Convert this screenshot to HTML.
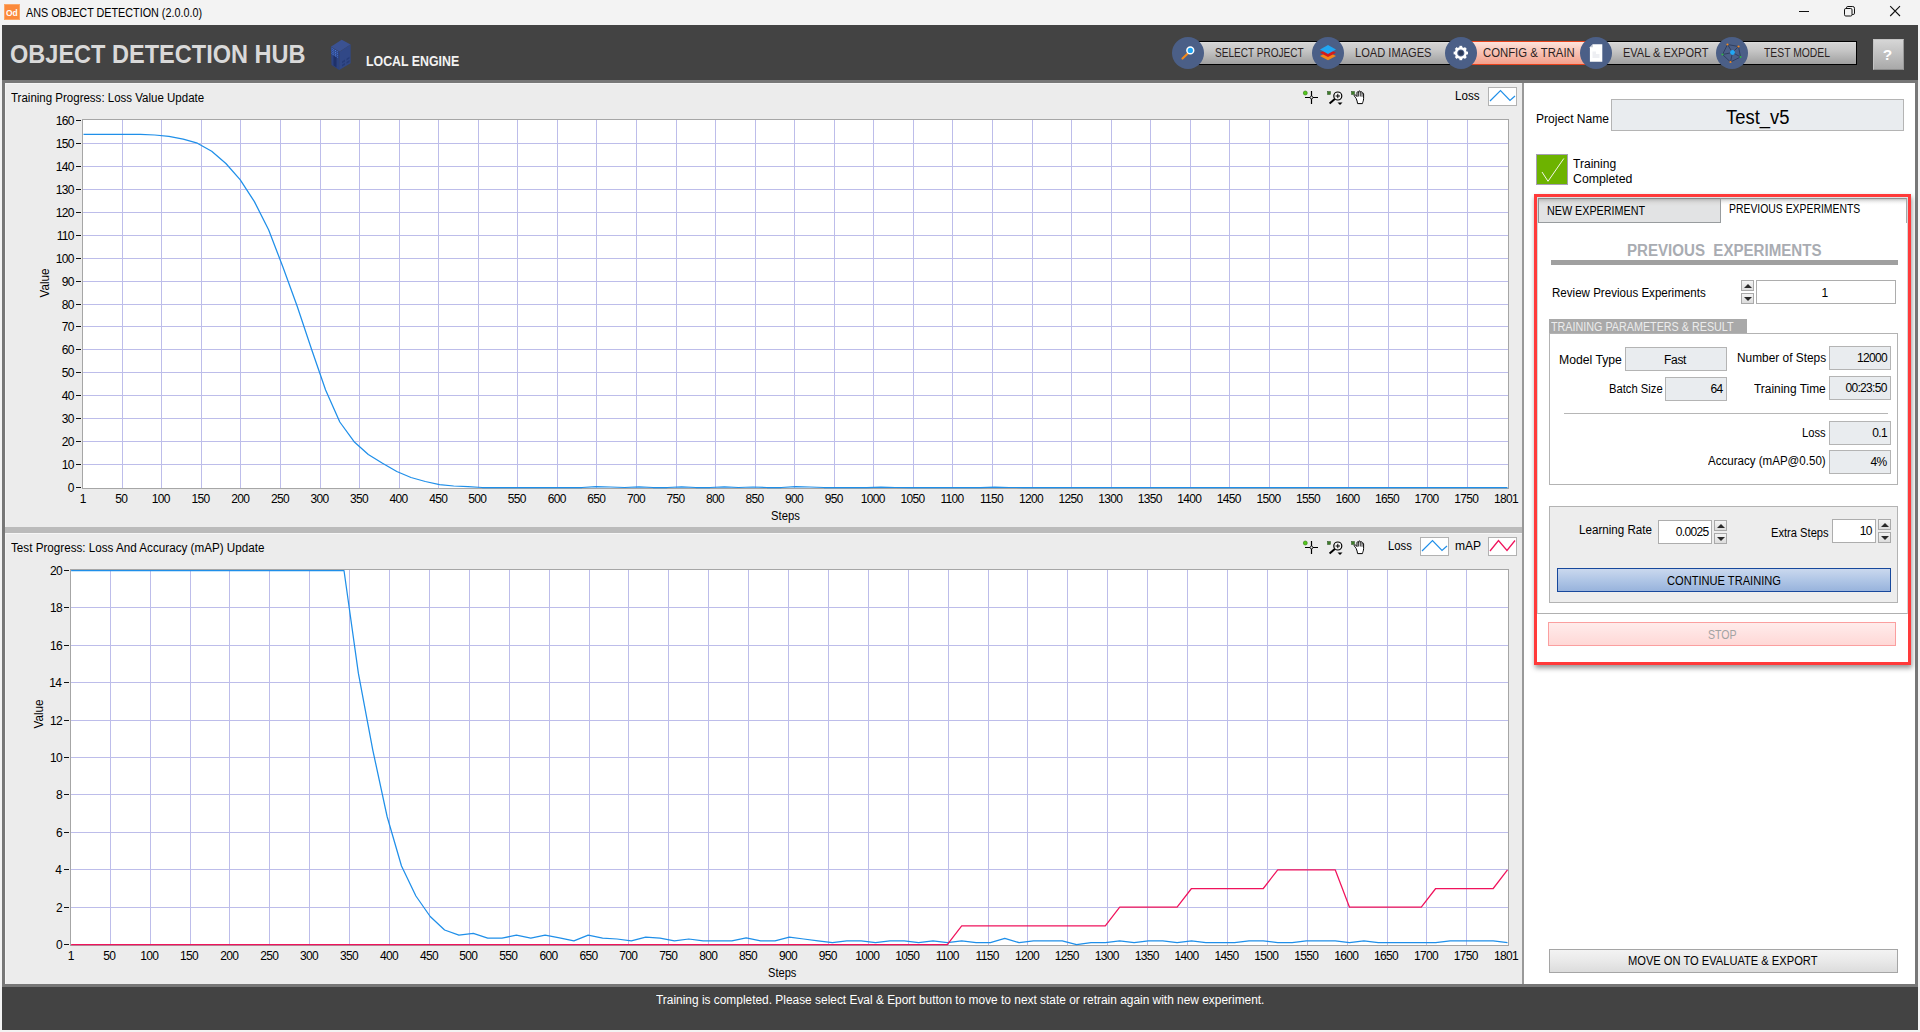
<!DOCTYPE html>
<html lang="en"><head><meta charset="utf-8"><title>ANS OBJECT DETECTION (2.0.0.0)</title>
<style>
html,body{margin:0;padding:0;background:#f3f3f3;}
#app{position:relative;width:1920px;height:1032px;overflow:hidden;background:#f3f3f3;font-family:"Liberation Sans",sans-serif;font-size:12px;color:#000;}
#app div,#app svg,#app i{position:absolute;box-sizing:border-box;}
.t{white-space:nowrap;line-height:0;height:0;}
.plot{overflow:visible;}
.ticks i{display:block;height:1px;background:#111;}
.fld{background:#e9ecef;border:1px solid #b4b4b4;}
.inp{background:#fff;border:1px solid #adadad;}
.spin{background:linear-gradient(#f4f4f4,#dcdcdc);border:1px solid #a9a9a9;}
.spin:after{content:"";position:absolute;left:50%;top:50%;margin-left:-4px;border:4px solid transparent;}
.spin.up:after{border-bottom:4px solid #2a2a2a;margin-top:-6px;}
.spin.dn:after{border-top:4px solid #2a2a2a;margin-top:-2px;}
.nav{height:24px;top:41px;border:1px solid #000;background:linear-gradient(#dedede 0%,#d2d2d2 8%,#c8c8c8 35%,#b2b2b2 70%,#a0a0a0 100%);}
.nav.on{border-color:#e8421c;background:linear-gradient(#fde3dc 0%,#f9c3b5 45%,#f3a08c 100%);}
.circ{width:32px;height:32px;top:37px;border-radius:50%;background:#4b5f87;}
.lg{background:#fff;border:1px solid #b2b2b2;}
</style></head>
<body>
<div id="app">

<div style="left:2px;top:25px;width:1916px;height:1005px;background:#434343"></div>
<div style="left:4px;top:4px;width:16px;height:16px;background:#fb8a3c;border:1px solid #fca766"></div>
<svg style="left:1790px;top:0" width="130" height="25" viewBox="0 0 130 25" fill="none" stroke="#111" stroke-width="1"><path d="M9 11.5H19"/><rect x="54.5" y="8.5" width="7.5" height="7.5" rx="1.3"/><path d="M56.5 8.5V7.8Q56.5 6.5 57.8 6.5H62.7Q64.5 6.5 64.5 8.3V13.2Q64.5 14.5 63.2 14.5H62.2"/><path d="M100.2 6.2L110 16M110 6.2L100.2 16" stroke-width="1.1"/></svg>

<!-- navigation -->
<div class="nav" style="left:1190px;width:140px"></div>
<div class="nav" style="left:1329px;width:133px"></div>
<div class="nav on" style="left:1461px;width:137px"></div>
<div class="nav" style="left:1597px;width:137px"></div>
<div class="nav" style="left:1733px;width:124px"></div>
<div class="circ" style="left:1172px"></div>
<div class="circ" style="left:1312px"></div>
<div class="circ" style="left:1445px"></div>
<div class="circ" style="left:1580px"></div>
<div class="circ" style="left:1716px"></div>
<div style="left:1873px;top:39px;width:31px;height:31px;background:linear-gradient(#d6d6d6,#a9a9a9);border:1px solid #c4c4c4;border-bottom-color:#8c8c8c;border-right-color:#9a9a9a"></div>

<!-- panels -->
<div style="left:2px;top:80px;width:1916px;height:907px;background:#777"></div>
<div style="left:5px;top:83px;width:1517px;height:901px;background:#ececec;border-top:1px solid #f4f4f4;border-left:1px solid #f4f4f4"></div>
<div style="left:1522px;top:83px;width:2px;height:901px;background:#999"></div>
<div style="left:1524px;top:83px;width:391px;height:901px;background:#fff"></div>
<div style="left:5px;top:527px;width:1517px;height:6px;background:#bbb"></div>
<div style="left:6px;top:533px;width:1516px;height:1px;background:#f6f6f6"></div>

<!-- legends -->
<div class="lg" style="left:1488px;top:87px;width:29px;height:19px"></div>
<div class="lg" style="left:1420px;top:537px;width:29px;height:19px"></div>
<div class="lg" style="left:1488px;top:537px;width:29px;height:19px"></div>

<!-- right panel -->
<div class="fld" style="left:1611px;top:99px;width:293px;height:32px"></div>
<div style="left:1536px;top:154px;width:32px;height:31px;background:#6db300;border:1px solid #a59fb4"></div>
<div style="left:1534px;top:194px;width:377px;height:471px;border:3px solid #ff3a3a;box-shadow:1px 3px 5px rgba(0,0,0,.42);background:#fff"></div>
<div style="left:1537px;top:197px;width:371px;height:417px;border:1px solid #b0b0b0;border-top:none;border-left-color:#d4d8d8;border-right-color:#d4d8d8;background:#fff"></div>
<div style="left:1537px;top:197px;width:371px;height:1px;background:#dfe3e3"></div>
<div style="left:1721px;top:198px;width:186px;height:25px;border-top:1px solid #8f9193;border-right:1px solid #a4a6a8;background:linear-gradient(#c4c4c4 0,#e6e6e6 2px,#f8f8f8 4px,#fff 6px)"></div>
<div style="left:1538px;top:198px;width:183px;height:25px;border:1px solid #989c9e;border-top-color:#85898b;border-left-color:#8d9193;background:linear-gradient(#b6b6b6 0,#cecece 2px,#dcdcdc 4px,#e2e3e4 7px,#e2e3e4)"></div>
<div style="left:1551px;top:260px;width:347px;height:5px;background:#a0a0a0"></div>
<div class="spin up" style="left:1741px;top:280px;width:13px;height:11px"></div>
<div class="spin dn" style="left:1741px;top:293px;width:13px;height:11px"></div>
<div class="inp" style="left:1756px;top:280px;width:140px;height:24px"></div>
<div style="left:1549px;top:319px;width:198px;height:14px;background:#a9a9a9"></div>
<div style="left:1549px;top:333px;width:349px;height:152px;border:1px solid #b3b3b3;background:#fff"></div>
<div class="fld" style="left:1625px;top:347px;width:102px;height:24px"></div>
<div class="fld" style="left:1829px;top:346px;width:62px;height:24px"></div>
<div class="fld" style="left:1665px;top:377px;width:62px;height:24px"></div>
<div class="fld" style="left:1829px;top:376px;width:62px;height:24px"></div>
<div style="left:1564px;top:413px;width:324px;height:1px;background:#b6b6b6"></div>
<div class="fld" style="left:1829px;top:421px;width:62px;height:24px"></div>
<div class="fld" style="left:1829px;top:450px;width:62px;height:24px"></div>
<div style="left:1549px;top:506px;width:349px;height:97px;border:1px solid #b3b3b3;background:#ededed"></div>
<div class="inp" style="left:1658px;top:520px;width:54px;height:24px"></div>
<div class="spin up" style="left:1714px;top:520px;width:13px;height:11px"></div>
<div class="spin dn" style="left:1714px;top:533px;width:13px;height:11px"></div>
<div class="inp" style="left:1832px;top:519px;width:44px;height:24px"></div>
<div class="spin up" style="left:1878px;top:519px;width:13px;height:11px"></div>
<div class="spin dn" style="left:1878px;top:532px;width:13px;height:11px"></div>
<div style="left:1557px;top:568px;width:334px;height:24px;border:1px solid #17489c;background:linear-gradient(#cad8ee 0%,#b0c6e6 50%,#98b3dc 100%)"></div>
<div style="left:1548px;top:622px;width:348px;height:24px;border:1px solid #fb9f9f;background:linear-gradient(#ffeceb,#ffe2e1 50%,#ffd8d6)"></div>
<div style="left:1549px;top:949px;width:349px;height:24px;border:1px solid #a5a5a5;background:linear-gradient(#f3f3f3,#e9e9e9 50%,#dcdcdc)"></div>
<svg class="plot" style="left:82px;top:119px" width="1427" height="370" viewBox="82 119 1427 370">
<rect x="82.5" y="119.5" width="1426" height="369" fill="#fff" stroke="#a6a6a6"/>
<path d="M122.5 120V488M161.5 120V488M201.5 120V488M240.5 120V488M280.5 120V488M320.5 120V488M359.5 120V488M399.5 120V488M438.5 120V488M478.5 120V488M517.5 120V488M557.5 120V488M596.5 120V488M636.5 120V488M676.5 120V488M715.5 120V488M755.5 120V488M794.5 120V488M834.5 120V488M873.5 120V488M913.5 120V488M952.5 120V488M992.5 120V488M1032.5 120V488M1071.5 120V488M1111.5 120V488M1150.5 120V488M1190.5 120V488M1229.5 120V488M1269.5 120V488M1308.5 120V488M1348.5 120V488M1388.5 120V488M1427.5 120V488M1467.5 120V488M83 464.5H1508M83 441.5H1508M83 418.5H1508M83 395.5H1508M83 372.5H1508M83 349.5H1508M83 326.5H1508M83 304.5H1508M83 281.5H1508M83 258.5H1508M83 235.5H1508M83 212.5H1508M83 189.5H1508M83 166.5H1508M83 143.5H1508" stroke="#bdbdea" stroke-width="1" fill="none" shape-rendering="crispEdges"/>
<polyline points="83.5,134.4 97.7,134.4 112.0,134.4 126.2,134.4 140.5,134.4 154.7,135.0 168.9,136.4 183.2,139.2 197.4,143.2 211.7,151.2 225.9,163.5 240.1,179.6 254.4,201.6 268.6,229.7 282.9,267.0 297.1,306.0 311.3,348.5 325.6,390.0 339.8,422.0 354.1,441.7 368.3,454.5 382.5,463.3 396.8,471.5 411.0,477.5 425.3,481.5 439.5,484.6 453.7,486.0 468.0,486.6 482.2,487.5 496.5,487.5 510.7,487.5 524.9,487.5 539.2,487.5 553.4,487.5 567.7,487.5 581.9,487.5 596.1,486.6 610.4,487.0 624.6,487.5 638.9,486.8 653.1,487.5 667.3,487.5 681.6,486.9 695.8,487.5 710.1,487.5 724.3,486.8 738.5,487.5 752.8,487.0 767.0,487.5 781.3,487.5 795.5,486.7 809.7,487.0 824.0,487.5 838.2,487.5 852.4,487.5 866.7,487.5 880.9,487.2 895.2,487.5 909.4,487.5 923.6,487.5 937.9,487.5 952.1,487.5 966.4,487.5 980.6,487.5 994.8,487.2 1009.1,487.5 1023.3,487.5 1037.6,487.5 1051.8,487.5 1066.0,487.5 1080.3,487.5 1094.5,487.5 1108.8,487.5 1123.0,487.5 1137.2,487.5 1151.5,487.5 1165.7,487.5 1180.0,487.5 1194.2,487.5 1208.4,487.5 1222.7,487.5 1236.9,487.5 1251.2,487.5 1265.4,487.5 1279.6,487.5 1293.9,487.5 1308.1,487.5 1322.4,487.5 1336.6,487.5 1350.8,487.5 1365.1,487.5 1379.3,487.5 1393.6,487.5 1407.8,487.5 1422.0,487.5 1436.3,487.5 1450.5,487.5 1464.8,487.5 1479.0,487.5 1493.2,487.5 1507.5,487.5" fill="none" stroke="#1f8fe9" stroke-width="1.25" stroke-linejoin="round"/>
</svg><svg class="plot" style="left:70px;top:569px" width="1439" height="377" viewBox="70 569 1439 377">
<rect x="70.5" y="569.5" width="1438" height="376" fill="#fff" stroke="#a6a6a6"/>
<path d="M110.5 570V945M150.5 570V945M190.5 570V945M229.5 570V945M269.5 570V945M309.5 570V945M349.5 570V945M389.5 570V945M429.5 570V945M469.5 570V945M509.5 570V945M549.5 570V945M589.5 570V945M628.5 570V945M668.5 570V945M708.5 570V945M748.5 570V945M788.5 570V945M828.5 570V945M868.5 570V945M908.5 570V945M948.5 570V945M988.5 570V945M1027.5 570V945M1067.5 570V945M1107.5 570V945M1147.5 570V945M1187.5 570V945M1227.5 570V945M1267.5 570V945M1307.5 570V945M1347.5 570V945M1387.5 570V945M1426.5 570V945M1466.5 570V945M71 907.5H1508M71 869.5H1508M71 832.5H1508M71 794.5H1508M71 757.5H1508M71 720.5H1508M71 682.5H1508M71 645.5H1508M71 607.5H1508" stroke="#bdbdea" stroke-width="1" fill="none" shape-rendering="crispEdges"/>
<polyline points="71.1,570.5 85.5,570.5 99.8,570.5 114.2,570.5 128.6,570.5 142.9,570.5 157.3,570.5 171.7,570.5 186.0,570.5 200.4,570.5 214.8,570.5 229.1,570.5 243.5,570.5 257.9,570.5 272.2,570.5 286.6,570.5 300.9,570.5 315.3,570.5 329.7,570.5 344.0,570.5 358.4,673.4 372.8,750.1 387.1,816.5 401.5,866.0 415.9,896.0 430.2,916.5 444.6,930.0 458.9,935.2 473.3,933.4 487.7,938.1 502.0,938.1 516.4,935.2 530.8,938.1 545.1,935.2 559.5,937.9 573.9,940.9 588.2,935.2 602.6,938.1 617.0,939.0 631.3,940.9 645.7,937.1 660.0,938.1 674.4,940.9 688.8,939.0 703.1,940.9 717.5,940.9 731.9,940.9 746.2,937.9 760.6,940.9 775.0,940.9 789.3,937.1 803.7,939.0 818.0,940.9 832.4,942.7 846.8,940.9 861.1,940.9 875.5,942.7 889.9,940.9 904.2,940.9 918.6,942.7 933.0,940.9 947.3,942.7 961.7,940.9 976.1,942.7 990.4,942.7 1004.8,938.4 1019.1,942.7 1033.5,940.9 1047.9,940.9 1062.2,940.9 1076.6,944.6 1091.0,942.7 1105.3,942.7 1119.7,940.9 1134.1,942.7 1148.4,940.9 1162.8,940.9 1177.1,942.7 1191.5,940.9 1205.9,942.7 1220.2,942.7 1234.6,942.7 1249.0,940.9 1263.3,940.9 1277.7,942.7 1292.1,942.7 1306.4,940.9 1320.8,940.9 1335.2,940.9 1349.5,942.7 1363.9,940.9 1378.2,942.7 1392.6,942.7 1407.0,942.7 1421.3,942.7 1435.7,942.7 1450.1,940.9 1464.4,940.9 1478.8,940.9 1493.2,940.9 1507.5,942.7" fill="none" stroke="#1f8fe9" stroke-width="1.25" stroke-linejoin="round"/>
<polyline points="71.1,944.6 85.5,944.6 99.8,944.6 114.2,944.6 128.6,944.6 142.9,944.6 157.3,944.6 171.7,944.6 186.0,944.6 200.4,944.6 214.8,944.6 229.1,944.6 243.5,944.6 257.9,944.6 272.2,944.6 286.6,944.6 300.9,944.6 315.3,944.6 329.7,944.6 344.0,944.6 358.4,944.6 372.8,944.6 387.1,944.6 401.5,944.6 415.9,944.6 430.2,944.6 444.6,944.6 458.9,944.6 473.3,944.6 487.7,944.6 502.0,944.6 516.4,944.6 530.8,944.6 545.1,944.6 559.5,944.6 573.9,944.6 588.2,944.6 602.6,944.6 617.0,944.6 631.3,944.6 645.7,944.6 660.0,944.6 674.4,944.6 688.8,944.6 703.1,944.6 717.5,944.6 731.9,944.6 746.2,944.6 760.6,944.6 775.0,944.6 789.3,944.6 803.7,944.6 818.0,944.6 832.4,944.6 846.8,944.6 861.1,944.6 875.5,944.6 889.9,944.6 904.2,944.6 918.6,944.6 933.0,944.6 947.3,944.6 961.7,925.9 976.1,925.9 990.4,925.9 1004.8,925.9 1019.1,925.9 1033.5,925.9 1047.9,925.9 1062.2,925.9 1076.6,925.9 1091.0,925.9 1105.3,925.9 1119.7,907.2 1134.1,907.2 1148.4,907.2 1162.8,907.2 1177.1,907.2 1191.5,888.5 1205.9,888.5 1220.2,888.5 1234.6,888.5 1249.0,888.5 1263.3,888.5 1277.7,869.8 1292.1,869.8 1306.4,869.8 1320.8,869.8 1335.2,869.8 1349.5,907.2 1363.9,907.2 1378.2,907.2 1392.6,907.2 1407.0,907.2 1421.3,907.2 1435.7,888.5 1450.1,888.5 1464.4,888.5 1478.8,888.5 1493.2,888.5 1507.5,869.8" fill="none" stroke="#f0135c" stroke-width="1.25" stroke-linejoin="round"/>
</svg><div class="ticks"><i style="left:76px;top:487px;width:5px"></i><i style="left:76px;top:464px;width:5px"></i><i style="left:76px;top:441px;width:5px"></i><i style="left:76px;top:418px;width:5px"></i><i style="left:76px;top:395px;width:5px"></i><i style="left:76px;top:372px;width:5px"></i><i style="left:76px;top:349px;width:5px"></i><i style="left:76px;top:326px;width:5px"></i><i style="left:76px;top:304px;width:5px"></i><i style="left:76px;top:281px;width:5px"></i><i style="left:76px;top:258px;width:5px"></i><i style="left:76px;top:235px;width:5px"></i><i style="left:76px;top:212px;width:5px"></i><i style="left:76px;top:189px;width:5px"></i><i style="left:76px;top:166px;width:5px"></i><i style="left:76px;top:143px;width:5px"></i><i style="left:76px;top:120px;width:5px"></i><i style="left:64px;top:944px;width:5px"></i><i style="left:64px;top:907px;width:5px"></i><i style="left:64px;top:869px;width:5px"></i><i style="left:64px;top:832px;width:5px"></i><i style="left:64px;top:794px;width:5px"></i><i style="left:64px;top:757px;width:5px"></i><i style="left:64px;top:720px;width:5px"></i><i style="left:64px;top:682px;width:5px"></i><i style="left:64px;top:645px;width:5px"></i><i style="left:64px;top:607px;width:5px"></i><i style="left:64px;top:570px;width:5px"></i></div>
<!-- chart tool icons -->
<svg style="left:1300px;top:88px" width="72" height="20" viewBox="1300 88 72 20" fill="none">
<g>
<circle cx="1305.3" cy="93" r="2" fill="#55c81e" stroke="#2d7a0c" stroke-width=".6"/>
<path d="M1311.5 91V104M1305 97.5H1318" stroke="#000" stroke-width="1.2"/><circle cx="1311.5" cy="97.5" r="1.4" fill="#ececec" stroke="#000" stroke-width=".8"/>
<rect x="1327.5" y="91.5" width="3" height="3" fill="#3d7d2a" stroke="#2b4d22" stroke-width=".5"/>
<circle cx="1337.8" cy="96" r="4" fill="#f4f4f4" stroke="#000" stroke-width="1.2"/><path d="M1335.6 96H1340M1337.8 93.8V98.2" stroke="#000" stroke-width="1"/><path d="M1334.8 99L1329.6 103.6" stroke="#000" stroke-width="2"/><path d="M1337.5 102.5H1342.5L1340 105Z" fill="#000"/>
<rect x="1351.5" y="91.5" width="3" height="3" fill="#3d7d2a" stroke="#2b4d22" stroke-width=".5"/>
<path d="M1356.2 98.5C1354.8 96.4 1353.6 95.6 1354.4 94.9C1355.2 94.3 1356.3 95.6 1357 96.6V92.6C1357 91.5 1358.6 91.5 1358.6 92.6V91.8C1358.6 90.7 1360.3 90.7 1360.3 91.8V92.4C1360.3 91.4 1362 91.4 1362 92.5V93.6C1362 92.7 1363.6 92.7 1363.6 93.8V98.6C1363.6 101 1362.6 102.2 1362.4 103.6H1357.6C1357.4 102 1356.9 100.2 1356.2 98.5Z" fill="#fff" stroke="#000" stroke-width="1"/><path d="M1358.6 93V96.5M1360.3 92.5V96.5M1362 94V96.8" stroke="#000" stroke-width=".8"/>
</g></svg>
<svg style="left:1300px;top:538px" width="72" height="20" viewBox="1300 88 72 20" fill="none">
<circle cx="1305.3" cy="93" r="2" fill="#55c81e" stroke="#2d7a0c" stroke-width=".6"/>
<path d="M1311.5 91V104M1305 97.5H1318" stroke="#000" stroke-width="1.2"/><circle cx="1311.5" cy="97.5" r="1.4" fill="#ececec" stroke="#000" stroke-width=".8"/>
<rect x="1327.5" y="91.5" width="3" height="3" fill="#3d7d2a" stroke="#2b4d22" stroke-width=".5"/>
<circle cx="1337.8" cy="96" r="4" fill="#f4f4f4" stroke="#000" stroke-width="1.2"/><path d="M1335.6 96H1340M1337.8 93.8V98.2" stroke="#000" stroke-width="1"/><path d="M1334.8 99L1329.6 103.6" stroke="#000" stroke-width="2"/><path d="M1337.5 102.5H1342.5L1340 105Z" fill="#000"/>
<rect x="1351.5" y="91.5" width="3" height="3" fill="#3d7d2a" stroke="#2b4d22" stroke-width=".5"/>
<path d="M1356.2 98.5C1354.8 96.4 1353.6 95.6 1354.4 94.9C1355.2 94.3 1356.3 95.6 1357 96.6V92.6C1357 91.5 1358.6 91.5 1358.6 92.6V91.8C1358.6 90.7 1360.3 90.7 1360.3 91.8V92.4C1360.3 91.4 1362 91.4 1362 92.5V93.6C1362 92.7 1363.6 92.7 1363.6 93.8V98.6C1363.6 101 1362.6 102.2 1362.4 103.6H1357.6C1357.4 102 1356.9 100.2 1356.2 98.5Z" fill="#fff" stroke="#000" stroke-width="1"/><path d="M1358.6 93V96.5M1360.3 92.5V96.5M1362 94V96.8" stroke="#000" stroke-width=".8"/>
</svg>
<!-- legend glyphs -->
<svg style="left:1488px;top:87px" width="29" height="19" viewBox="0 0 29 19" fill="none"><path d="M2 14L12.5 3.5L22 13.5L27 9" stroke="#1f8fe9" stroke-width="1.2"/></svg>
<svg style="left:1420px;top:537px" width="29" height="19" viewBox="0 0 29 19" fill="none"><path d="M2 14L12.5 3.5L22 13.5L27 9" stroke="#1f8fe9" stroke-width="1.2"/></svg>
<svg style="left:1488px;top:537px" width="29" height="19" viewBox="0 0 29 19" fill="none"><path d="M2 14L10.5 3.5L19 13.5L27 3.5" stroke="#f0135c" stroke-width="1.3"/></svg>
<!-- check mark -->
<svg style="left:1536px;top:154px" width="32" height="31" viewBox="0 0 32 31" fill="none"><path d="M6 18L12 27.3L27.8 4.5" stroke="#f4f8ea" stroke-width="1"/></svg>
<!-- server icon -->
<svg style="left:328px;top:38px" width="26" height="34" viewBox="0 0 26 34"><path d="M13.7 1.8L22.6 6.6L11.5 13.8L2.8 8.7Z" fill="#3b5292"/><path d="M2.8 8.7L11.5 13.8L11.2 32L3.5 27Z" fill="#2d4381"/><path d="M11.5 13.8L22.6 6.6V25.3L11.2 32Z" fill="#314887"/><path d="M5.5 17L8.5 19V29.5L5.5 27.5Z" fill="#1f3169"/><path d="M3.6 10.2L9.8 14M3.6 12L9.8 15.8M3.6 13.8L9.8 17.6M3.6 15.6L9.8 19.4" stroke="#4d7de0" stroke-width="1" stroke-dasharray="1.2 .8"/><path d="M14 23.5L17 21.6V23.4L14 25.3ZM18.5 20.7L21.5 18.8V20.6L18.5 22.5ZM14 26.8L17 24.9V26.7L14 28.6ZM18.5 24L21.5 22.1V23.9L18.5 25.8Z" fill="#263b78"/></svg>
<!-- nav icons -->
<svg style="left:1172px;top:37px" width="32" height="32" viewBox="0 0 32 32" fill="none"><path d="M10.5 21.5L15.5 16.8" stroke="#f28a1e" stroke-width="2.2" stroke-linecap="round"/><circle cx="18.3" cy="13.4" r="3.4" fill="#1fa4f4" stroke="#fff" stroke-width="1.5"/></svg>
<svg style="left:1312px;top:37px" width="32" height="32" viewBox="0 0 32 32"><path d="M8 19L16 15L24 19L16 23.3Z" fill="#f1861c"/><path d="M8 15.8L16 11.8L24 15.8L16 20.1Z" fill="#d3191c"/><path d="M8 12.5L16 8L24 12.5L16 17Z" fill="#22a6f2"/></svg>
<svg style="left:1445px;top:37px" width="32" height="32" viewBox="0 0 32 32"><g transform="translate(15.8 16) scale(.92)"><circle r="5.2" fill="none" stroke="#fff" stroke-width="2.6"/><g fill="#fff"><rect x="-1.5" y="-7.8" width="3" height="3"/><rect x="-1.5" y="4.8" width="3" height="3"/><rect x="-7.8" y="-1.5" width="3" height="3"/><rect x="4.8" y="-1.5" width="3" height="3"/><g transform="rotate(45)"><rect x="-1.5" y="-7.8" width="3" height="3"/><rect x="-1.5" y="4.8" width="3" height="3"/><rect x="-7.8" y="-1.5" width="3" height="3"/><rect x="4.8" y="-1.5" width="3" height="3"/></g></g><circle r="2.7" fill="#2c3957"/></g></svg>
<svg style="left:1580px;top:37px" width="32" height="32" viewBox="0 0 32 32"><path d="M12.8 7.2H22.3V24.7H9.9V10.2Z" fill="#fff"/><path d="M12.8 7.2V10.2H9.9Z" fill="#c3c8d4"/><path d="M12.5 14.5H16V17H19.5V21H12.5Z" fill="#eeeff3"/></svg>
<svg style="left:1716px;top:37px" width="32" height="32" viewBox="0 0 32 32" fill="none"><g stroke="#24304d" stroke-width=".7"><path d="M11.5 7.5L22.5 9.5L24.5 20L14.5 25L6.5 17.5Z"/><path d="M16.5 15.5L11.5 7.5M16.5 15.5L22.5 9.5M16.5 15.5L24.5 20M16.5 15.5L14.5 25M16.5 15.5L6.5 17.5"/></g><circle cx="16.5" cy="15.5" r="2.4" fill="#20a8f5"/><circle cx="11.5" cy="7.5" r="1.1" fill="#f08a24"/><circle cx="22.5" cy="9.5" r="1.1" fill="#f08a24"/><circle cx="24.5" cy="20" r="1.1" fill="#31b64a"/><circle cx="14.5" cy="25" r="1.1" fill="#f08a24"/><circle cx="6.5" cy="17.5" r="1.1" fill="#31b64a"/></svg>
<div class="t" style="left:25.86px;top:13.00px;font-size:12px;transform-origin:0 0;transform:scaleX(0.8987);">ANS OBJECT DETECTION (2.0.0.0)</div>
<div class="t" style="left:6.27px;top:13.00px;font-size:9px;color:#fff;font-weight:bold;transform-origin:0 0;transform:scaleX(0.9424);">Od</div>
<div class="t" style="left:10.47px;top:54.00px;font-size:25px;color:#d9d9d9;font-weight:bold;transform-origin:0 0;transform:scaleX(0.9414);">OBJECT DETECTION HUB</div>
<div class="t" style="left:366.38px;top:61.00px;font-size:14px;color:#f2f2f2;font-weight:bold;transform-origin:0 0;transform:scaleX(0.8824);">LOCAL ENGINE</div>
<div class="t" style="left:1214.93px;top:53.00px;font-size:12.5px;color:#2b1f1f;transform-origin:0 0;transform:scaleX(0.8049);">SELECT PROJECT</div>
<div class="t" style="left:1354.54px;top:53.00px;font-size:12.5px;color:#2b1f1f;transform-origin:0 0;transform:scaleX(0.8880);">LOAD IMAGES</div>
<div class="t" style="left:1483.29px;top:53.00px;font-size:12.5px;color:#2b1f1f;transform-origin:0 0;transform:scaleX(0.9069);">CONFIG &amp; TRAIN</div>
<div class="t" style="left:1623.15px;top:53.00px;font-size:12.5px;color:#2b1f1f;transform-origin:0 0;transform:scaleX(0.8806);">EVAL &amp; EXPORT</div>
<div class="t" style="left:1764.46px;top:53.00px;font-size:12.5px;color:#2b1f1f;transform-origin:0 0;transform:scaleX(0.8287);">TEST MODEL</div>
<div class="t" style="left:1882.68px;top:55.00px;font-size:15.5px;color:#fff;font-weight:bold;">?</div>
<div class="t" style="left:11.09px;top:98.00px;font-size:12px;transform-origin:0 0;transform:scaleX(0.9588);">Training Progress: Loss Value Update</div>
<div class="t" style="left:67.71px;top:488.00px;font-size:12px;letter-spacing:-0.670px;">0</div>
<div class="t" style="left:61.71px;top:465.00px;font-size:12px;letter-spacing:-0.670px;">10</div>
<div class="t" style="left:61.71px;top:442.00px;font-size:12px;letter-spacing:-0.670px;">20</div>
<div class="t" style="left:61.71px;top:419.00px;font-size:12px;letter-spacing:-0.670px;">30</div>
<div class="t" style="left:61.71px;top:396.00px;font-size:12px;letter-spacing:-0.670px;">40</div>
<div class="t" style="left:61.71px;top:373.00px;font-size:12px;letter-spacing:-0.670px;">50</div>
<div class="t" style="left:61.71px;top:350.00px;font-size:12px;letter-spacing:-0.670px;">60</div>
<div class="t" style="left:61.71px;top:327.00px;font-size:12px;letter-spacing:-0.670px;">70</div>
<div class="t" style="left:61.71px;top:305.00px;font-size:12px;letter-spacing:-0.670px;">80</div>
<div class="t" style="left:61.71px;top:282.00px;font-size:12px;letter-spacing:-0.670px;">90</div>
<div class="t" style="left:55.71px;top:259.00px;font-size:12px;letter-spacing:-0.670px;">100</div>
<div class="t" style="left:56.71px;top:236.00px;font-size:12px;letter-spacing:-0.670px;">110</div>
<div class="t" style="left:55.71px;top:213.00px;font-size:12px;letter-spacing:-0.670px;">120</div>
<div class="t" style="left:55.71px;top:190.00px;font-size:12px;letter-spacing:-0.670px;">130</div>
<div class="t" style="left:55.71px;top:167.00px;font-size:12px;letter-spacing:-0.670px;">140</div>
<div class="t" style="left:55.71px;top:144.00px;font-size:12px;letter-spacing:-0.670px;">150</div>
<div class="t" style="left:55.71px;top:121.00px;font-size:12px;letter-spacing:-0.670px;">160</div>
<div class="t" style="left:79.79px;top:499.00px;font-size:12px;letter-spacing:-0.670px;">1</div>
<div class="t" style="left:115.29px;top:499.00px;font-size:12px;letter-spacing:-0.670px;">50</div>
<div class="t" style="left:151.85px;top:499.00px;font-size:12px;letter-spacing:-0.670px;">100</div>
<div class="t" style="left:191.41px;top:499.00px;font-size:12px;letter-spacing:-0.670px;">150</div>
<div class="t" style="left:231.32px;top:499.00px;font-size:12px;letter-spacing:-0.670px;">200</div>
<div class="t" style="left:270.88px;top:499.00px;font-size:12px;letter-spacing:-0.670px;">250</div>
<div class="t" style="left:310.42px;top:499.00px;font-size:12px;letter-spacing:-0.670px;">300</div>
<div class="t" style="left:349.98px;top:499.00px;font-size:12px;letter-spacing:-0.670px;">350</div>
<div class="t" style="left:389.62px;top:499.00px;font-size:12px;letter-spacing:-0.670px;">400</div>
<div class="t" style="left:429.17px;top:499.00px;font-size:12px;letter-spacing:-0.670px;">450</div>
<div class="t" style="left:468.28px;top:499.00px;font-size:12px;letter-spacing:-0.670px;">500</div>
<div class="t" style="left:507.84px;top:499.00px;font-size:12px;letter-spacing:-0.670px;">550</div>
<div class="t" style="left:547.76px;top:499.00px;font-size:12px;letter-spacing:-0.670px;">600</div>
<div class="t" style="left:587.31px;top:499.00px;font-size:12px;letter-spacing:-0.670px;">650</div>
<div class="t" style="left:626.88px;top:499.00px;font-size:12px;letter-spacing:-0.670px;">700</div>
<div class="t" style="left:666.43px;top:499.00px;font-size:12px;letter-spacing:-0.670px;">750</div>
<div class="t" style="left:705.99px;top:499.00px;font-size:12px;letter-spacing:-0.670px;">800</div>
<div class="t" style="left:745.55px;top:499.00px;font-size:12px;letter-spacing:-0.670px;">850</div>
<div class="t" style="left:785.09px;top:499.00px;font-size:12px;letter-spacing:-0.670px;">900</div>
<div class="t" style="left:824.64px;top:499.00px;font-size:12px;letter-spacing:-0.670px;">950</div>
<div class="t" style="left:860.84px;top:499.00px;font-size:12px;letter-spacing:-0.670px;">1000</div>
<div class="t" style="left:900.40px;top:499.00px;font-size:12px;letter-spacing:-0.670px;">1050</div>
<div class="t" style="left:940.45px;top:499.00px;font-size:12px;letter-spacing:-0.670px;">1100</div>
<div class="t" style="left:980.01px;top:499.00px;font-size:12px;letter-spacing:-0.670px;">1150</div>
<div class="t" style="left:1019.06px;top:499.00px;font-size:12px;letter-spacing:-0.670px;">1200</div>
<div class="t" style="left:1058.62px;top:499.00px;font-size:12px;letter-spacing:-0.670px;">1250</div>
<div class="t" style="left:1098.17px;top:499.00px;font-size:12px;letter-spacing:-0.670px;">1300</div>
<div class="t" style="left:1137.73px;top:499.00px;font-size:12px;letter-spacing:-0.670px;">1350</div>
<div class="t" style="left:1177.28px;top:499.00px;font-size:12px;letter-spacing:-0.670px;">1400</div>
<div class="t" style="left:1216.84px;top:499.00px;font-size:12px;letter-spacing:-0.670px;">1450</div>
<div class="t" style="left:1256.39px;top:499.00px;font-size:12px;letter-spacing:-0.670px;">1500</div>
<div class="t" style="left:1295.95px;top:499.00px;font-size:12px;letter-spacing:-0.670px;">1550</div>
<div class="t" style="left:1335.50px;top:499.00px;font-size:12px;letter-spacing:-0.670px;">1600</div>
<div class="t" style="left:1375.06px;top:499.00px;font-size:12px;letter-spacing:-0.670px;">1650</div>
<div class="t" style="left:1414.61px;top:499.00px;font-size:12px;letter-spacing:-0.670px;">1700</div>
<div class="t" style="left:1454.17px;top:499.00px;font-size:12px;letter-spacing:-0.670px;">1750</div>
<div class="t" style="left:1494.09px;top:499.00px;font-size:12px;letter-spacing:-0.670px;">1801</div>
<div class="t" style="left:771.19px;top:516.00px;font-size:12px;transform-origin:0 0;transform:scaleX(0.9393);">Steps</div>
<div class="t" style="left:44.80px;top:283.00px;font-size:12px;transform-origin:0 0;transform:rotate(-90deg) translate(-14.53px,0.32px) scaleX(0.9726);">Value</div>
<div class="t" style="left:1454.98px;top:96.00px;font-size:12px;transform-origin:0 0;transform:scaleX(0.9661);">Loss</div>
<div class="t" style="left:11.09px;top:548.00px;font-size:12px;transform-origin:0 0;transform:scaleX(0.9718);">Test Progress: Loss And Accuracy (mAP) Update</div>
<div class="t" style="left:56.11px;top:945.00px;font-size:12px;letter-spacing:-0.670px;">0</div>
<div class="t" style="left:56.02px;top:908.00px;font-size:12px;letter-spacing:-0.670px;">2</div>
<div class="t" style="left:55.29px;top:870.00px;font-size:12px;letter-spacing:-0.670px;">4</div>
<div class="t" style="left:56.11px;top:833.00px;font-size:12px;letter-spacing:-0.670px;">6</div>
<div class="t" style="left:56.11px;top:795.00px;font-size:12px;letter-spacing:-0.670px;">8</div>
<div class="t" style="left:50.11px;top:758.00px;font-size:12px;letter-spacing:-0.670px;">10</div>
<div class="t" style="left:50.02px;top:721.00px;font-size:12px;letter-spacing:-0.670px;">12</div>
<div class="t" style="left:49.29px;top:683.00px;font-size:12px;letter-spacing:-0.670px;">14</div>
<div class="t" style="left:50.11px;top:646.00px;font-size:12px;letter-spacing:-0.670px;">16</div>
<div class="t" style="left:50.11px;top:608.00px;font-size:12px;letter-spacing:-0.670px;">18</div>
<div class="t" style="left:50.11px;top:571.00px;font-size:12px;letter-spacing:-0.670px;">20</div>
<div class="t" style="left:67.79px;top:956.00px;font-size:12px;letter-spacing:-0.670px;">1</div>
<div class="t" style="left:103.25px;top:956.00px;font-size:12px;letter-spacing:-0.670px;">50</div>
<div class="t" style="left:140.15px;top:956.00px;font-size:12px;letter-spacing:-0.670px;">100</div>
<div class="t" style="left:180.05px;top:956.00px;font-size:12px;letter-spacing:-0.670px;">150</div>
<div class="t" style="left:220.31px;top:956.00px;font-size:12px;letter-spacing:-0.670px;">200</div>
<div class="t" style="left:260.21px;top:956.00px;font-size:12px;letter-spacing:-0.670px;">250</div>
<div class="t" style="left:300.11px;top:956.00px;font-size:12px;letter-spacing:-0.670px;">300</div>
<div class="t" style="left:340.01px;top:956.00px;font-size:12px;letter-spacing:-0.670px;">350</div>
<div class="t" style="left:379.99px;top:956.00px;font-size:12px;letter-spacing:-0.670px;">400</div>
<div class="t" style="left:419.89px;top:956.00px;font-size:12px;letter-spacing:-0.670px;">450</div>
<div class="t" style="left:459.35px;top:956.00px;font-size:12px;letter-spacing:-0.670px;">500</div>
<div class="t" style="left:499.25px;top:956.00px;font-size:12px;letter-spacing:-0.670px;">550</div>
<div class="t" style="left:539.51px;top:956.00px;font-size:12px;letter-spacing:-0.670px;">600</div>
<div class="t" style="left:579.41px;top:956.00px;font-size:12px;letter-spacing:-0.670px;">650</div>
<div class="t" style="left:619.32px;top:956.00px;font-size:12px;letter-spacing:-0.670px;">700</div>
<div class="t" style="left:659.22px;top:956.00px;font-size:12px;letter-spacing:-0.670px;">750</div>
<div class="t" style="left:699.13px;top:956.00px;font-size:12px;letter-spacing:-0.670px;">800</div>
<div class="t" style="left:739.03px;top:956.00px;font-size:12px;letter-spacing:-0.670px;">850</div>
<div class="t" style="left:778.91px;top:956.00px;font-size:12px;letter-spacing:-0.670px;">900</div>
<div class="t" style="left:818.81px;top:956.00px;font-size:12px;letter-spacing:-0.670px;">950</div>
<div class="t" style="left:855.35px;top:956.00px;font-size:12px;letter-spacing:-0.670px;">1000</div>
<div class="t" style="left:895.25px;top:956.00px;font-size:12px;letter-spacing:-0.670px;">1050</div>
<div class="t" style="left:935.65px;top:956.00px;font-size:12px;letter-spacing:-0.670px;">1100</div>
<div class="t" style="left:975.55px;top:956.00px;font-size:12px;letter-spacing:-0.670px;">1150</div>
<div class="t" style="left:1014.95px;top:956.00px;font-size:12px;letter-spacing:-0.670px;">1200</div>
<div class="t" style="left:1054.85px;top:956.00px;font-size:12px;letter-spacing:-0.670px;">1250</div>
<div class="t" style="left:1094.75px;top:956.00px;font-size:12px;letter-spacing:-0.670px;">1300</div>
<div class="t" style="left:1134.65px;top:956.00px;font-size:12px;letter-spacing:-0.670px;">1350</div>
<div class="t" style="left:1174.55px;top:956.00px;font-size:12px;letter-spacing:-0.670px;">1400</div>
<div class="t" style="left:1214.45px;top:956.00px;font-size:12px;letter-spacing:-0.670px;">1450</div>
<div class="t" style="left:1254.35px;top:956.00px;font-size:12px;letter-spacing:-0.670px;">1500</div>
<div class="t" style="left:1294.25px;top:956.00px;font-size:12px;letter-spacing:-0.670px;">1550</div>
<div class="t" style="left:1334.15px;top:956.00px;font-size:12px;letter-spacing:-0.670px;">1600</div>
<div class="t" style="left:1374.05px;top:956.00px;font-size:12px;letter-spacing:-0.670px;">1650</div>
<div class="t" style="left:1413.95px;top:956.00px;font-size:12px;letter-spacing:-0.670px;">1700</div>
<div class="t" style="left:1453.85px;top:956.00px;font-size:12px;letter-spacing:-0.670px;">1750</div>
<div class="t" style="left:1494.09px;top:956.00px;font-size:12px;letter-spacing:-0.670px;">1801</div>
<div class="t" style="left:768.30px;top:973.00px;font-size:12px;transform-origin:0 0;transform:scaleX(0.9258);">Steps</div>
<div class="t" style="left:38.80px;top:714.00px;font-size:12px;transform-origin:0 0;transform:rotate(-90deg) translate(-14.53px,0.32px) scaleX(0.9726);">Value</div>
<div class="t" style="left:1387.50px;top:546.00px;font-size:12px;transform-origin:0 0;transform:scaleX(0.9409);">Loss</div>
<div class="t" style="left:1455.23px;top:546.00px;font-size:12px;transform-origin:0 0;transform:scaleX(1.0068);">mAP</div>
<div class="t" style="left:655.54px;top:1000.00px;font-size:12px;color:#fff;transform-origin:0 0;transform:scaleX(0.9922);">Training is completed. Please select Eval &amp; Eport button to move to next state or retrain again with new experiment.</div>
<div class="t" style="left:1536.14px;top:119.00px;font-size:12px;transform-origin:0 0;transform:scaleX(1.0039);">Project Name</div>
<div class="t" style="left:1725.77px;top:117.00px;font-size:20px;transform-origin:0 0;transform:scaleX(0.9200);">Test_v5</div>
<div class="t" style="left:1573.24px;top:164.00px;font-size:12px;transform-origin:0 0;transform:scaleX(1.0047);">Training</div>
<div class="t" style="left:1573.06px;top:179.00px;font-size:12px;transform-origin:0 0;transform:scaleX(1.0242);">Completed</div>
<div class="t" style="left:1547.27px;top:211.00px;font-size:12.5px;transform-origin:0 0;transform:scaleX(0.8603);">NEW EXPERIMENT</div>
<div class="t" style="left:1729.40px;top:209.00px;font-size:12.5px;transform-origin:0 0;transform:scaleX(0.8323);">PREVIOUS EXPERIMENTS</div>
<div class="t" style="left:1626.76px;top:251.00px;font-size:15.6px;color:#a9acb2;font-weight:bold;transform-origin:0 0;transform:scaleX(0.9673);">PREVIOUS  EXPERIMENTS</div>
<div class="t" style="left:1552.08px;top:293.00px;font-size:12px;transform-origin:0 0;transform:scaleX(0.9642);">Review Previous Experiments</div>
<div class="t" style="left:1821.49px;top:293.00px;font-size:12px;">1</div>
<div class="t" style="left:1550.85px;top:327.00px;font-size:12px;color:#ececec;transform-origin:0 0;transform:scaleX(0.8971);">TRAINING PARAMETERS &amp; RESULT</div>
<div class="t" style="left:1559.32px;top:360.00px;font-size:12px;transform-origin:0 0;transform:scaleX(1.0171);">Model Type</div>
<div class="t" style="left:1663.99px;top:360.00px;font-size:12px;letter-spacing:-0.300px;">Fast</div>
<div class="t" style="left:1736.55px;top:358.00px;font-size:12px;transform-origin:0 0;transform:scaleX(0.9895);">Number of Steps</div>
<div class="t" style="left:1857.01px;top:358.00px;font-size:12px;letter-spacing:-0.670px;">12000</div>
<div class="t" style="left:1608.51px;top:389.00px;font-size:12px;transform-origin:0 0;transform:scaleX(0.9361);">Batch Size</div>
<div class="t" style="left:1710.59px;top:389.00px;font-size:12px;letter-spacing:-0.670px;">64</div>
<div class="t" style="left:1754.44px;top:389.00px;font-size:12px;transform-origin:0 0;transform:scaleX(0.9920);">Training Time</div>
<div class="t" style="left:1845.45px;top:388.00px;font-size:12px;letter-spacing:-0.670px;">00:23:50</div>
<div class="t" style="left:1802.41px;top:433.00px;font-size:12px;transform-origin:0 0;transform:scaleX(0.9325);">Loss</div>
<div class="t" style="left:1872.28px;top:433.00px;font-size:12px;letter-spacing:-0.670px;">0.1</div>
<div class="t" style="left:1708.45px;top:461.00px;font-size:12px;transform-origin:0 0;transform:scaleX(0.9630);">Accuracy (mAP@0.50)</div>
<div class="t" style="left:1870.54px;top:462.00px;font-size:12px;letter-spacing:-0.670px;">4%</div>
<div class="t" style="left:1578.98px;top:530.00px;font-size:12px;transform-origin:0 0;transform:scaleX(0.9679);">Learning Rate</div>
<div class="t" style="left:1675.72px;top:532.00px;font-size:12px;letter-spacing:-0.670px;">0.0025</div>
<div class="t" style="left:1771.32px;top:533.00px;font-size:12px;transform-origin:0 0;transform:scaleX(0.9287);">Extra Steps</div>
<div class="t" style="left:1859.81px;top:531.00px;font-size:12px;letter-spacing:-0.670px;">10</div>
<div class="t" style="left:1667.25px;top:581.00px;font-size:12.5px;transform-origin:0 0;transform:scaleX(0.8881);">CONTINUE TRAINING</div>
<div class="t" style="left:1707.58px;top:635.00px;font-size:12.5px;color:#a3a3a3;transform-origin:0 0;transform:scaleX(0.8485);">STOP</div>
<div class="t" style="left:1628.19px;top:961.00px;font-size:12.5px;transform-origin:0 0;transform:scaleX(0.8902);">MOVE ON TO EVALUATE &amp; EXPORT</div>
</div>
</body></html>
